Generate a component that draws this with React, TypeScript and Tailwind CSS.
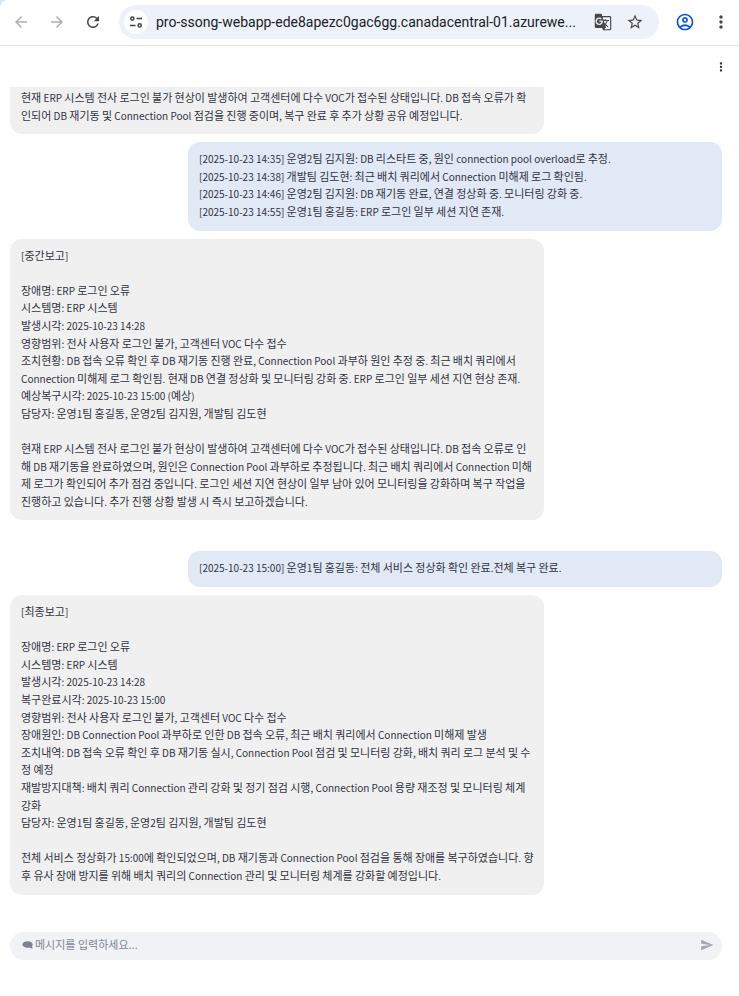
import { Fragment } from "react";
import {
  MdArrowBack,
  MdArrowForward,
  MdRefresh,
  MdGTranslate,
  MdStarBorder,
  MdOutlineAccountCircle,
  MdMoreVert,
  MdSend,
} from "react-icons/md";

type Message = { role: "user" | "assistant"; text: string; cut?: boolean; spaced?: boolean };

const messages: Message[] = [
  {
    role: "assistant",
    cut: true,
    text: "현재 ERP 시스템 전사 로그인 불가 현상이 발생하여 고객센터에 다수 VOC가 접수된 상태입니다. DB 접속 오류가 확인되어 DB 재기동 및 Connection Pool 점검을 진행 중이며, 복구 완료 후 추가 상황 공유 예정입니다.",
  },
  {
    role: "user",
    text: `[2025-10-23 14:35] 운영2팀 김지원: DB 리스타트 중, 원인 connection pool overload로 추정.
[2025-10-23 14:38] 개발팀 김도현: 최근 배치 쿼리에서 Connection 미해제 로그 확인됨.
[2025-10-23 14:46] 운영2팀 김지원: DB 재기동 완료, 연결 정상화 중. 모니터링 강화 중.
[2025-10-23 14:55] 운영1팀 홍길동: ERP 로그인 일부 세션 지연 존재.`,
  },
  {
    role: "assistant",
    text: `[중간보고]

장애명: ERP 로그인 오류
시스템명: ERP 시스템
발생시각: 2025-10-23 14:28
영향범위: 전사 사용자 로그인 불가, 고객센터 VOC 다수 접수
조치현황: DB 접속 오류 확인 후 DB 재기동 진행 완료, Connection Pool 과부하 원인 추정 중. 최근 배치 쿼리에서 Connection 미해제 로그 확인됨. 현재 DB 연결 정상화 및 모니터링 강화 중. ERP 로그인 일부 세션 지연 현상 존재.
예상복구시각: 2025-10-23 15:00 (예상)
담당자: 운영1팀 홍길동, 운영2팀 김지원, 개발팀 김도현

현재 ERP 시스템 전사 로그인 불가 현상이 발생하여 고객센터에 다수 VOC가 접수된 상태입니다. DB 접속 오류로 인해 DB 재기동을 완료하였으며, 원인은 Connection Pool 과부하로 추정됩니다. 최근 배치 쿼리에서 Connection 미해제 로그가 확인되어 추가 점검 중입니다. 로그인 세션 지연 현상이 일부 남아 있어 모니터링을 강화하며 복구 작업을 진행하고 있습니다. 추가 진행 상황 발생 시 즉시 보고하겠습니다.`,
  },
  {
    role: "user",
    spaced: true,
    text: "[2025-10-23 15:00] 운영1팀 홍길동: 전체 서비스 정상화 확인 완료.전체 복구 완료.",
  },
  {
    role: "assistant",
    text: `[최종보고]

장애명: ERP 로그인 오류
시스템명: ERP 시스템
발생시각: 2025-10-23 14:28
복구완료시각: 2025-10-23 15:00
영향범위: 전사 사용자 로그인 불가, 고객센터 VOC 다수 접수
장애원인: DB Connection Pool 과부하로 인한 DB 접속 오류, 최근 배치 쿼리에서 Connection 미해제 발생
조치내역: DB 접속 오류 확인 후 DB 재기동 실시, Connection Pool 점검 및 모니터링 강화, 배치 쿼리 로그 분석 및 수정 예정
재발방지대책: 배치 쿼리 Connection 관리 강화 및 정기 점검 시행, Connection Pool 용량 재조정 및 모니터링 체계 강화
담당자: 운영1팀 홍길동, 운영2팀 김지원, 개발팀 김도현

전체 서비스 정상화가 15:00에 확인되었으며, DB 재기동과 Connection Pool 점검을 통해 장애를 복구하였습니다. 향후 유사 장애 방지를 위해 배치 쿼리의 Connection 관리 및 모니터링 체계를 강화할 예정입니다.`,
  },
];

// Latin runs are set one size below the Hangul around them.
function MixedText({ text }: { text: string }) {
  return (
    <>
      {text.split(/([^가-힣]+)/).map((run, i) =>
        i % 2 === 1 ? (
          <span key={i} className="text-[10px]">
            {run}
          </span>
        ) : (
          <Fragment key={i}>{run}</Fragment>
        ),
      )}
    </>
  );
}

function Bubble({ role, text, cut, spaced }: Message) {
  const side = role === "user" ? "self-end bg-[#e1e8f6]" : "self-start bg-[#f0f0f0]";
  const top = cut ? "rounded-b-xl pt-[2px]" : "rounded-xl pt-2";
  return (
    <div className={`w-3/4 pb-[10px] pl-[11px] pr-[10px] ${side} ${top} ${spaced ? "mt-[23px]" : ""}`}>
      {text.split("\n").map((line, i) => (line ? <p key={i}><MixedText text={line} /></p> : <br key={i} />))}
    </div>
  );
}

function SiteSettingsIcon() {
  return (
    <svg width="14" height="14" viewBox="0 0 14 14" fill="none" stroke="#3c4043" strokeWidth="1.5">
      <circle cx="3.3" cy="3.6" r="1.6" />
      <path d="M7.5 3.6H13M1 10.4h5.5" />
      <circle cx="10.7" cy="10.4" r="1.6" />
    </svg>
  );
}

function BrowserBar() {
  return (
    <header className="bg-[#d3e3fd]">
      <div className="flex h-[46px] items-center rounded-tl-lg border-b border-[#dfe1e3] bg-white pb-px pl-3 pr-2 font-[Roboto,sans-serif]">
        <button aria-label="Back" className="mr-[18px] text-[#b0b0b0]">
          <MdArrowBack size={18} />
        </button>
        <button aria-label="Forward" className="mr-[18px] text-[#b0b0b0]">
          <MdArrowForward size={18} />
        </button>
        <button aria-label="Reload" className="mr-[17px] text-[#474747]">
          <MdRefresh size={18} />
        </button>
        <div className="flex h-[34px] min-w-0 flex-1 items-center rounded-full bg-[#ecf1fa] pl-[5px] pr-[15px]">
          <button
            aria-label="Site information"
            className="flex size-6 shrink-0 items-center justify-center rounded-full bg-white"
          >
            <SiteSettingsIcon />
          </button>
          <input
            aria-label="Address"
            readOnly
            value="pro-ssong-webapp-ede8apezc0gac6gg.canadacentral-01.azurewe..."
            className="ml-2 min-w-0 flex-1 bg-transparent text-sm text-[#202124] outline-none"
          />
          <button aria-label="Translate" className="mr-[14px] text-[#474747]">
            <MdGTranslate size={18} />
          </button>
          <button aria-label="Bookmark" className="text-[#474747]">
            <MdStarBorder size={18} />
          </button>
        </div>
        <button aria-label="Profile" className="ml-4 text-[#0b57d0]">
          <MdOutlineAccountCircle size={20} />
        </button>
        <button aria-label="Browser menu" className="ml-4 text-[#474747]">
          <MdMoreVert size={20} />
        </button>
      </div>
    </header>
  );
}

export default function App() {
  return (
    <div className="min-h-screen bg-white font-['Noto_Sans_CJK_KR',sans-serif] text-[11px] leading-[1.6] text-[#31333f]">
      <BrowserBar />
      <div className="flex h-[41px] items-center justify-end pr-[11px]">
        <button aria-label="Main menu" className="text-[#31333f]">
          <MdMoreVert size={14} />
        </button>
      </div>
      <main className="flex flex-col pl-[10px] pr-[17px]">
        <div className="flex flex-col gap-2">
          {messages.map((m, i) => (
            <Bubble key={i} {...m} />
          ))}
        </div>
        <form
          className="mt-[37px] flex h-7 items-center rounded-full bg-[#f0f2f6] pb-px pl-3 pr-2"
          onSubmit={(e) => e.preventDefault()}
        >
          <svg width="12" height="10" viewBox="0 0 12 10" fill="#7d808e" className="shrink-0">
            <path d="M5.5 1.2C2.6 1.2.4 2.6.4 4.5s2.200 3.300 5.100 3.300c.8 0 1.500-.1 2.200-.3.8.6 1.900 1 3.200.9-.6-.5-.9-1-.9-1.600.4-.6.7-1.500.7-2.300C10.700 2.600 8.400 1.200 5.500 1.200z" />
          </svg>
          <input
            aria-label="메시지"
            placeholder="메시지를 입력하세요..."
            className="ml-px min-w-0 flex-1 bg-transparent outline-none placeholder:text-[#838694]"
          />
          <button aria-label="Send" className="text-[#a3a8b8]">
            <MdSend size={14} />
          </button>
        </form>
      </main>
    </div>
  );
}
